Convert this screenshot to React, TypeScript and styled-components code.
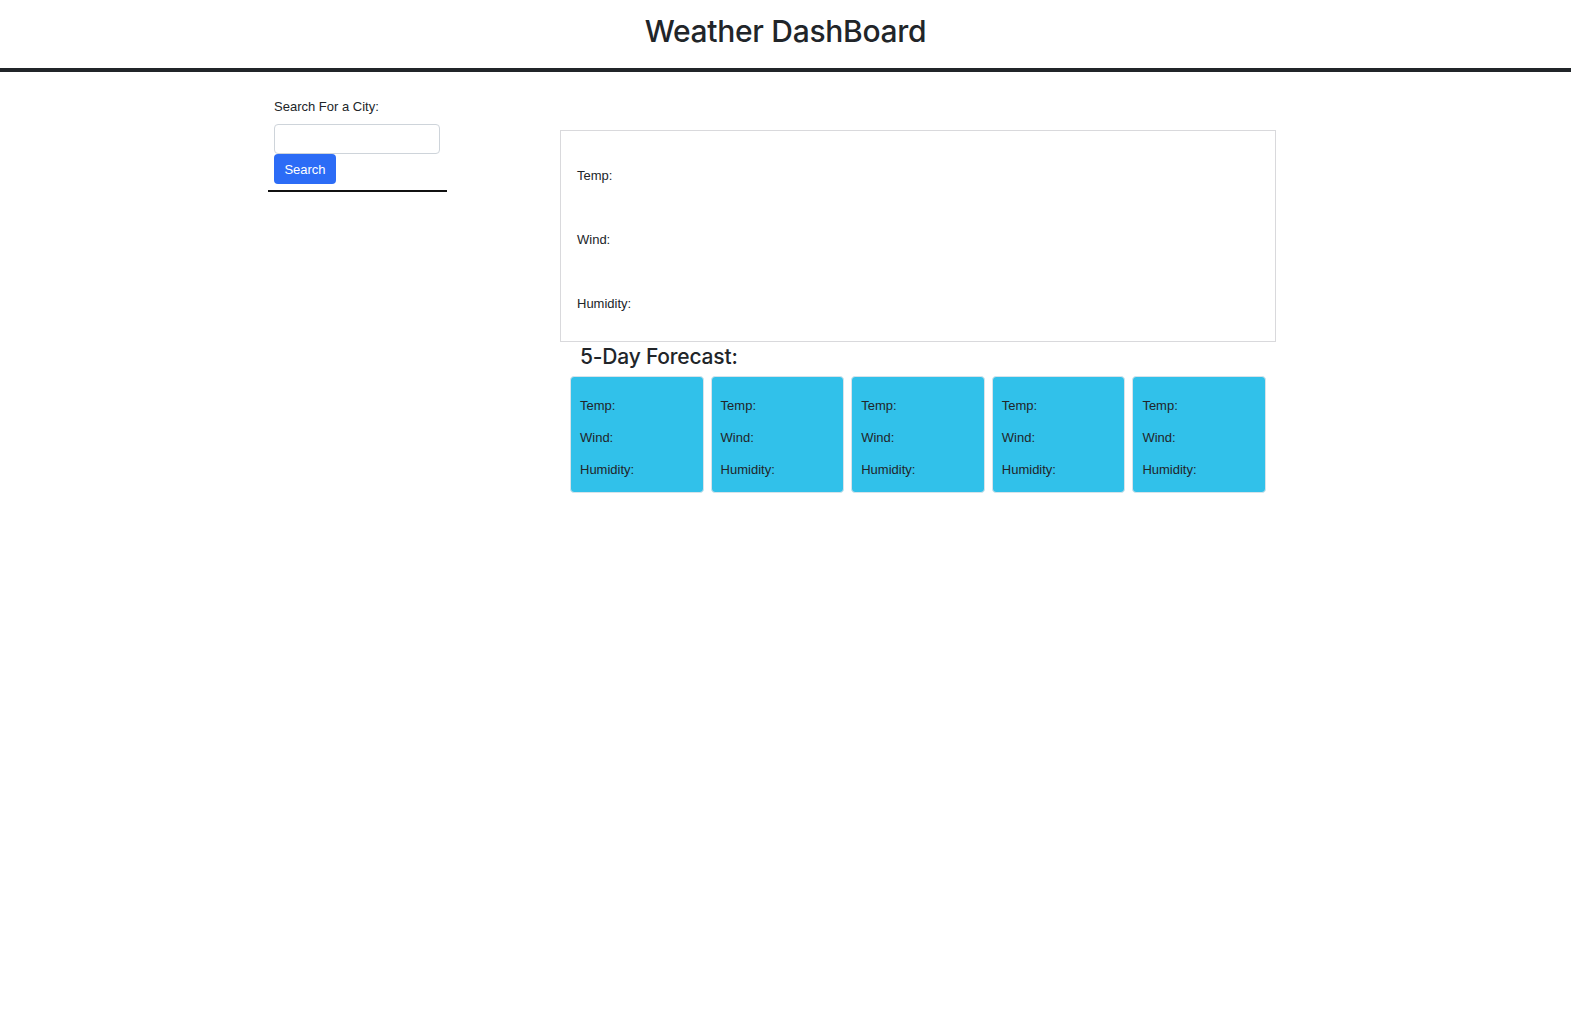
import React from "react";
import styled, { createGlobalStyle } from "styled-components";

const GlobalStyle = createGlobalStyle`
  html, body { margin: 0; padding: 0; background: #ffffff; }
  body {
    font-family: "Liberation Sans", Arial, Helvetica, sans-serif;
    color: #212529;
  }
  * { box-sizing: border-box; }
`;

const Header = styled.header`
  height: 72px;
  padding-bottom: 6px;
  display: flex;
  align-items: center;
  justify-content: center;
  border-bottom: 4px solid #212529;
`;

const Title = styled.h1`
  margin: 0;
  font-family: Inter, "Liberation Sans", Arial, sans-serif;
  font-size: 30px;
  line-height: 38px;
  font-weight: 500;
  color: #212529;
  letter-spacing: -0.3px;
`;

const Layout = styled.div`
  display: flex;
  align-items: flex-start;
  padding-left: 268px;
  gap: 113px;
`;

const Sidebar = styled.aside`
  width: 179px;
  padding-top: 25px;
  display: flex;
  flex-direction: column;
`;

const SearchArea = styled.div`
  padding-left: 6px;
  display: flex;
  flex-direction: column;
  align-items: flex-start;
`;

const Label = styled.label`
  font-size: 13px;
  line-height: 20px;
  margin-bottom: 7px;
`;

const Input = styled.input`
  width: 166px;
  height: 30px;
  border: 1px solid #ced4da;
  border-radius: 4px;
  padding: 0 8px;
  font-size: 13px;
  font-family: inherit;
  outline: none;
`;

const Button = styled.button`
  width: 62px;
  height: 30px;
  border: none;
  border-radius: 4px;
  background: #2c6cf6;
  color: #ffffff;
  font-family: inherit;
  font-size: 13px;
  padding: 0;
  cursor: pointer;
`;

const Divider = styled.div`
  margin-top: 6px;
  height: 2px;
  width: 179px;
  background: #111111;
`;

const Main = styled.main`
  width: 716px;
  padding-top: 58px;
  display: flex;
  flex-direction: column;
`;

const CurrentCard = styled.section`
  border: 1px solid #d9d9dc;
  padding: 35px 16px 27px;
  display: flex;
  flex-direction: column;
  gap: 44px;
`;

const Stat = styled.p`
  margin: 0;
  font-size: 13px;
  line-height: 20px;
  color: #212529;
`;

const ForecastTitle = styled.h4`
  margin: 2px 0 6px 20px;
  font-family: Inter, "Liberation Sans", Arial, sans-serif;
  font-size: 21px;
  line-height: 26px;
  font-weight: 500;
  letter-spacing: -0.2px;
  color: #212529;
`;

const ForecastRow = styled.div`
  display: grid;
  grid-template-columns: repeat(5, 1fr);
  gap: 7px;
  padding: 0 10px;
`;

const DayCard = styled.div`
  height: 117px;
  background: #31c1ea;
  border: 1px solid #d6e3ea;
  border-radius: 4px;
  padding: 19px 9px 12px;
  display: flex;
  flex-direction: column;
  gap: 12px;
`;

const days = [0, 1, 2, 3, 4];

export default function App() {
  return (
    <>
      <GlobalStyle />
      <Header>
        <Title>Weather DashBoard</Title>
      </Header>
      <Layout>
        <Sidebar>
          <SearchArea>
            <Label htmlFor="city">Search For a City:</Label>
            <Input id="city" type="text" />
            <Button>Search</Button>
          </SearchArea>
          <Divider />
        </Sidebar>
        <Main>
          <CurrentCard>
            <Stat>Temp:</Stat>
            <Stat>Wind:</Stat>
            <Stat>Humidity:</Stat>
          </CurrentCard>
          <ForecastTitle>5-Day Forecast:</ForecastTitle>
          <ForecastRow>
            {days.map((d) => (
              <DayCard key={d}>
                <Stat>Temp:</Stat>
                <Stat>Wind:</Stat>
                <Stat>Humidity:</Stat>
              </DayCard>
            ))}
          </ForecastRow>
        </Main>
      </Layout>
    </>
  );
}
